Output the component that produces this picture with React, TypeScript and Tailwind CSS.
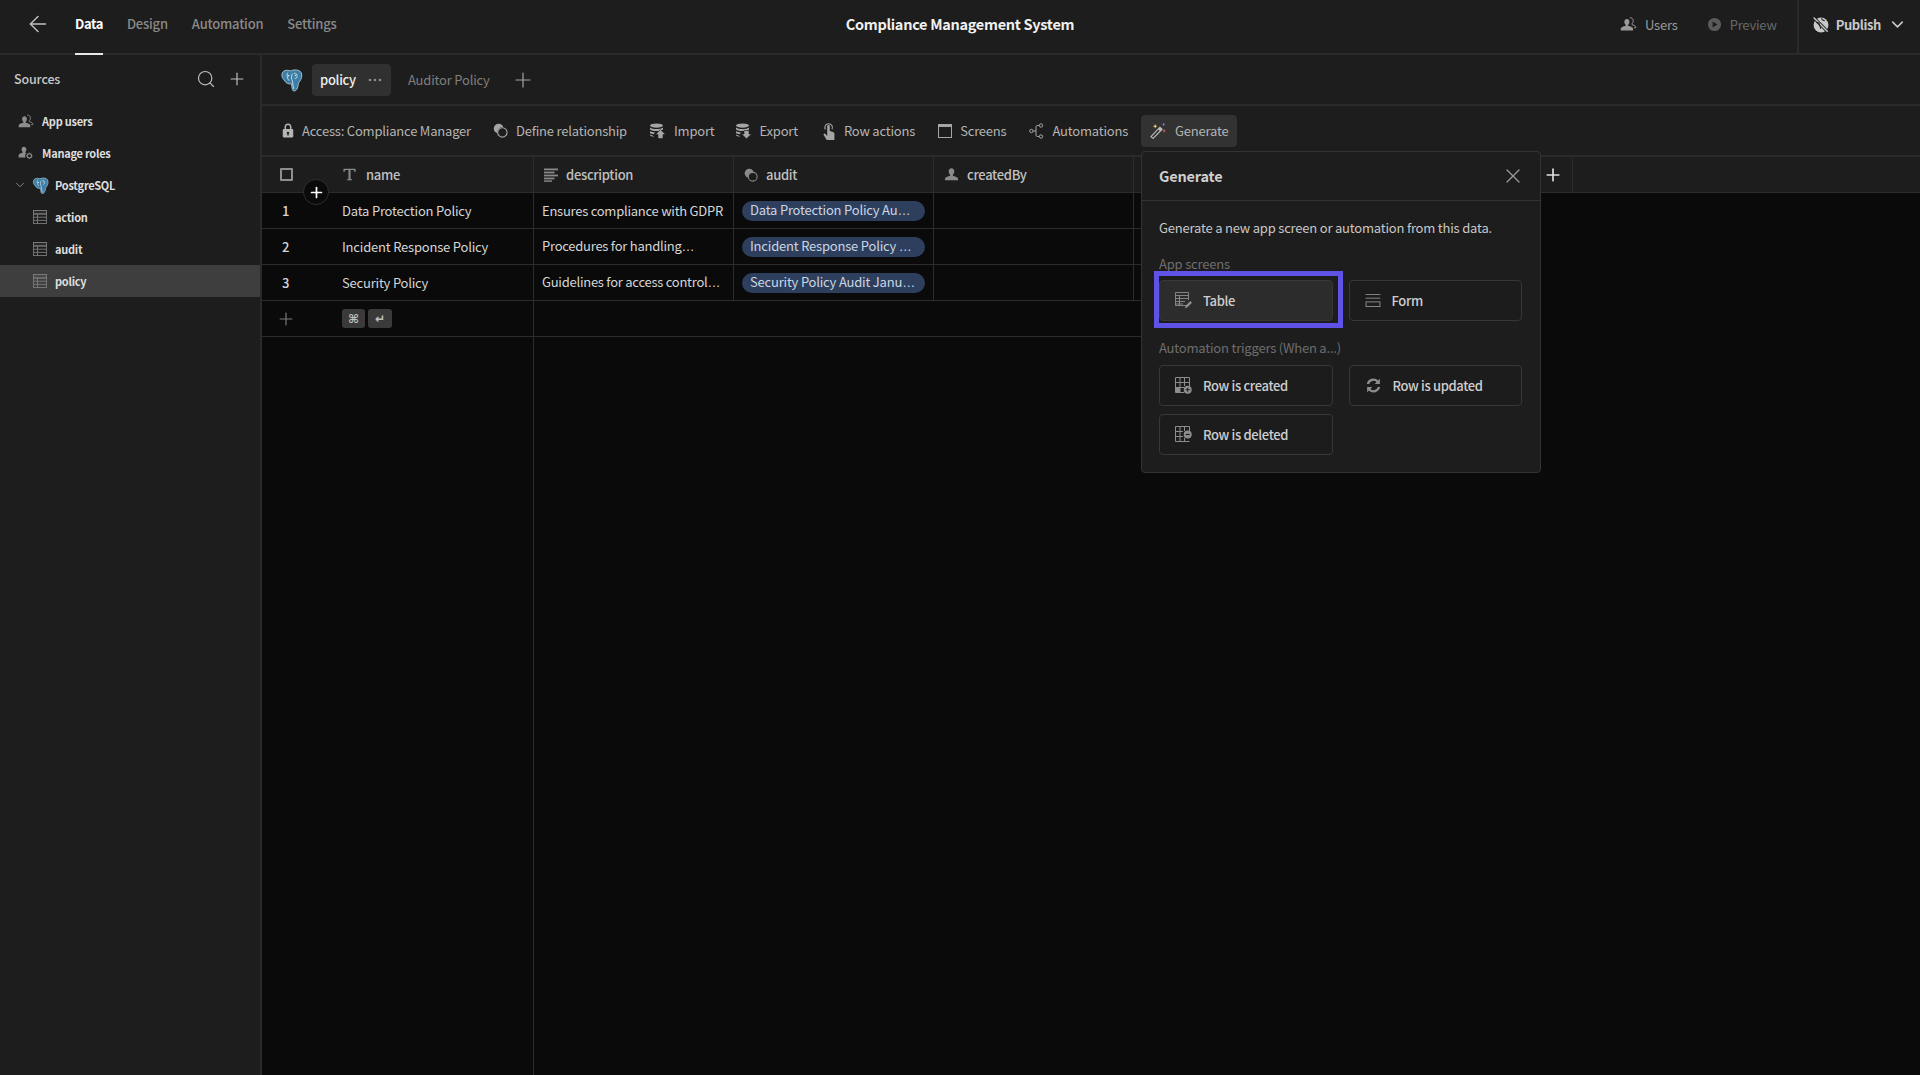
import React from "react";
import { ArrowLeft, Search, Plus, ChevronDown, X } from "lucide-react";

type P = { className?: string };

const Pg = ({ className }: P) => (
  <svg viewBox="0 0 24 24" className={className}>
    <path d="M2 6C2.500 2 7 1 11 2.500C14 1 20 .8 22 4C23.500 7 22.500 11 20.500 13.500C19.800 14.500 19.400 15 19 17C18.500 20 17.500 23.500 14.500 23.500C12.500 23.500 12.400 19 12 16C9 16.500 6.500 15.500 5 13C3 10.500 1.600 9 2 6Z" fill="#3d7ea6" stroke="#c4dbe8" strokeWidth="0.8" />
    <path d="M7.800 4.600C6.800 7.400 7.600 10.600 9.400 12.600M13.200 5.200C11.600 7 11.600 10.400 13 13.400C13.400 15.600 13.400 18.600 14.600 21.400M14.600 5C17 4.600 18 6.200 17.800 8.600C17.600 10.200 16 10.800 15.200 10" fill="none" stroke="#e8f1f6" strokeWidth="0.8" />
    <circle cx="9" cy="7.600" r="0.800" fill="#e8f1f6" />
    <circle cx="16" cy="7.200" r="0.700" fill="#e8f1f6" />
  </svg>
);

const Person = ({ className }: P) => (
  <svg viewBox="0 0 16 16" fill="currentColor" className={className}>
    <path d="M8 1.200c-1.900 0-3 1.500-3 3.400 0 1.500.7 2.900 1.500 3.600v1.100c-2 .5-4.300 1.400-5.100 2.300-.3.4-.4.9-.4 1.400v1h14v-1c0-.5-.1-1-.4-1.400-.8-.9-3.100-1.800-5.100-2.300V8.200c.8-.7 1.500-2.100 1.500-3.600 0-1.900-1.100-3.400-3-3.400z" />
  </svg>
);

const Group = ({ className }: P) => (
  <svg viewBox="0 0 18 16" fill="currentColor" className={className}>
    <path d="M7.500 2.600c-1.800 0-2.900 1.400-2.900 3.100 0 1.400.6 2.600 1.400 3.200v1c-1.800.5-4 1.200-4.800 2.100-.3.4-.4.8-.4 1.200V15h13v-1.800c0-.4-.1-.8-.4-1.200-.8-.9-3-1.600-4.800-2.100v-1c.8-.6 1.400-1.800 1.400-3.200 0-1.700-1.100-3.100-2.500-3.100z" />
    <path d="M10.400 1.500c1.900-.5 3.600 1 3.600 3 0 1.300-.5 2.400-1.200 3v1.200c1.400.4 2.800 1 3.600 1.800.3.4.4.8.4 1.100V12h-2" fill="none" stroke="currentColor" strokeWidth="1" />
  </svg>
);

const Roles = ({ className }: P) => (
  <svg viewBox="0 0 18 16" className={className}>
    <path fill="currentColor" d="M6.500 1C5 1 4 2.300 4 3.900c0 1.200.5 2.300 1.200 2.900v1C3.600 8.200 1.700 8.900 1 9.700c-.2.3-.3.7-.3 1.100V13h7.600a4.600 4.600 0 0 1 1-5l-1-.3v-.9C9 6.200 9.500 5.100 9.500 3.900 9.500 2.300 8 1 6.500 1z" />
    <circle cx="12.800" cy="11.200" r="2.400" fill="none" stroke="currentColor" strokeWidth="1.200" />
    <path d="M12.800 7.600v1.200M12.800 13.600v1.200M9.200 11.200h1.200M15.200 11.200h1.200M10.300 8.700l.8.8M14.500 12.900l.8.8M10.300 13.700l.8-.8M14.500 9.500l.8-.8" stroke="currentColor" strokeWidth="1.100" />
  </svg>
);

const TableIcon = ({ className }: P) => (
  <svg viewBox="0 0 14 14" fill="none" stroke="currentColor" strokeWidth="0.9" className={className}>
    <rect x="0.500" y="0.500" width="13" height="13" />
    <path d="M0.500 4h13M0.500 7.200h13M0.500 10.400h13M4.500 4v9.500" />
    <rect x="0.500" y="0.500" width="13" height="3.500" fill="currentColor" fillOpacity="0.150" />
  </svg>
);

const Lock = ({ className }: P) => (
  <svg viewBox="0 0 12 16" fill="currentColor" className={className}>
    <path fillRule="evenodd" d="M6 0.600C3.800 0.600 2.300 2.300 2.300 4.400V6.400H1.600C.9 6.400.4 6.900.4 7.600v6.600c0 .7.5 1.200 1.200 1.200h8.800c.7 0 1.200-.5 1.200-1.200V7.600c0-.7-.5-1.200-1.200-1.200H9.700V4.400C9.700 2.300 8.200.6 6 .6zM3.900 6.400V4.400C3.900 3.200 4.800 2.200 6 2.200s2.100 1 2.100 2.200v2H3.900zM6 9.200a1.400 1.400 0 0 1 .7 2.600v1.600H5.300v-1.600A1.400 1.400 0 0 1 6 9.200z" />
  </svg>
);

const Relation = ({ className }: P) => (
  <svg viewBox="0 0 16 16" className={className}>
    <circle cx="6" cy="6" r="5.200" fill="currentColor" />
    <circle cx="10" cy="10" r="5.400" fill="#1d1d1d" />
    <circle cx="10" cy="10" r="5" fill="none" stroke="currentColor" strokeWidth="1.200" />
  </svg>
);

const DbArrow = ({ className, down }: P & { down?: boolean }) => (
  <svg viewBox="0 0 17 16" fill="currentColor" className={className}>
    <ellipse cx="7.500" cy="2.600" rx="6.500" ry="2.100" />
    <path d="M1 4.400c1.400 1.200 3.800 1.600 6.500 1.600s5.100-.4 6.500-1.600V6.400c-1.400 1.100-3.800 1.500-6.500 1.500S2.400 7.500 1 6.400zM1 8c1.300 1 3 1.400 5.200 1.500L4.500 11.300c-1.500-.2-2.800-.6-3.500-1.200zM1 11.500c.6.5 1.500.8 2.600 1l1.700 1.300C3 13.600 1 13 1 12z" />
    {down ? <path d="M9 7.500h5v3.500h2.500L11.500 15.800 6.500 11H9z" stroke="#1d1d1d" strokeWidth="0.600" /> : <path d="M11.500 6.500L16.500 11.500H14v4H9v-4H6.500z" stroke="#1d1d1d" strokeWidth="0.600" />}
  </svg>
);

const Tap = ({ className }: P) => (
  <svg viewBox="0 0 14 18" fill="currentColor" className={className}>
    <path d="M5.200 7.500V4.200a1.300 1.300 0 0 1 2.600 0V9l3.200.9c.9.3 1.400 1 1.400 1.900V18H4.700L1.700 13c-.4-.7 0-1.500.8-1.500.4 0 .8.2 1 .5l1.700 2z" />
    <path d="M3.400 7.500a3.800 3.800 0 1 1 6.600-.2" fill="none" stroke="currentColor" strokeWidth="1.100" />
  </svg>
);

const Screens = ({ className }: P) => (
  <svg viewBox="0 0 14 14" className={className}>
    <rect x="0.500" y="0.500" width="13" height="13" fill="none" stroke="currentColor" strokeWidth="1" />
    <rect x="0.500" y="0.500" width="13" height="2.500" fill="currentColor" />
  </svg>
);

const Flow = ({ className }: P) => (
  <svg viewBox="0 0 15 16" fill="none" stroke="currentColor" strokeWidth="1" className={className}>
    <circle cx="2.400" cy="8" r="1.700" />
    <circle cx="12" cy="2.500" r="1.700" />
    <circle cx="12" cy="13.500" r="1.700" />
    <path d="M4.100 8H7M10.300 2.500H8.300C7.500 2.500 7 3 7 3.800v8.400c0 .8.5 1.300 1.300 1.300h2" />
  </svg>
);

const Wand = ({ className }: P) => (
  <svg viewBox="0 0 18 18" className={className}>
    <path d="M1 15.500L10.500 5.500 12.800 7.700 3.300 17.300z" fill="none" stroke="#bdbdbd" strokeWidth="1.200" />
    <path d="M8.500 7.600l2.300 2.200 2-2.100-2.300-2.200z" fill="#bdbdbd" />
    <path d="M5.500 2L6.200 3.800 8 4.500 6.200 5.200 5.500 7 4.800 5.200 3 4.500 4.800 3.800z" fill="#e8c46a" />
    <path d="M14.500 0.500L15 2 16.500 2.500 15 3 14.500 4.500 14 3 12.500 2.500 14 2z" fill="#7d8ff0" />
    <path d="M15 7.500L15.600 9 17 9.500 15.600 10 15 11.500 14.400 10 13 9.500 14.400 9z" fill="#e06262" />
  </svg>
);

const TypeT = ({ className }: P) => (
  <svg viewBox="0 0 14 14" fill="currentColor" className={className}>
    <path d="M0.500 0.800H13.500V4.400H12.400C12.200 2.900 11.800 2.200 10.500 2.200H8.100V11.800L9.800 12.300V13.300H4.200V12.300L5.900 11.800V2.200H3.500C2.200 2.200 1.800 2.900 1.600 4.400H.5z" />
  </svg>
);

const Lines = ({ className }: P) => (
  <svg viewBox="0 0 14 14" fill="currentColor" className={className}>
    <rect x="0" y="0.500" width="14" height="1.800" />
    <rect x="0" y="3.600" width="10.500" height="1.800" />
    <rect x="0" y="6.600" width="14" height="1.800" />
    <rect x="0" y="9.600" width="10.500" height="1.800" />
    <rect x="0" y="12.400" width="8" height="1.400" />
  </svg>
);

const TableEdit = ({ className }: P) => (
  <svg viewBox="0 0 17 17" fill="none" stroke="currentColor" strokeWidth="0.900" className={className}>
    <path d="M11 13.500H.5V.5H13.500V8" />
    <path d="M.5 3.500H13.500M.5 6.500H13.500M.5 9.500H10M.5 12H8M4.500 3.500V13.500" />
    <path d="M9.800 16.500l1-3 4.500-4.500 1.700 1.700-4.500 4.500z" fill="currentColor" stroke="none" />
  </svg>
);

const FormIcon = ({ className }: P) => (
  <svg viewBox="0 0 16 14" fill="none" stroke="currentColor" strokeWidth="1" className={className}>
    <path d="M0 .5H16M0 4.500H16" />
    <rect x="0.500" y="8.500" width="15" height="5" />
  </svg>
);

const RowAdd = ({ className }: P) => (
  <svg viewBox="0 0 17 17" className={className}>
    <path d="M.5.5H14.500V9M.5.5V15.500H9M.5 5.500H14.500M5 .5V15.500M9.500 .5V9M.5 10.500H9" fill="none" stroke="currentColor" strokeWidth="1" />
    <rect x="0.500" y="10.500" width="4.500" height="5" fill="currentColor" />
    <circle cx="12.700" cy="12.700" r="4" fill="currentColor" />
    <path d="M12.700 10.700v4M10.700 12.700h4" stroke="#1d1d1d" strokeWidth="1" />
  </svg>
);

const RowDel = ({ className }: P) => (
  <svg viewBox="0 0 17 17" className={className}>
    <path d="M.5.500H14.500V5M.5.500V15.500H14.500M.5 5.500H8M.5 10.500H8M5 .5V15.500M9.500 .5V5M9.500 12V15.500" fill="none" stroke="currentColor" strokeWidth="1" />
    <circle cx="12.700" cy="8.500" r="4" fill="currentColor" />
    <path d="M10.700 8.500h4" stroke="#1d1d1d" strokeWidth="1.200" />
  </svg>
);

const Refresh = ({ className }: P) => (
  <svg viewBox="0 0 16 16" fill="currentColor" className={className}>
    <path d="M14 1.500v5H9.200l1.700-1.700A4.300 4.300 0 0 0 3.900 6.500H1.700A6.400 6.400 0 0 1 12.400 3.200z" />
    <path d="M2 14.500v-5h4.800L5.100 11.200A4.300 4.300 0 0 0 12.100 9.500h2.200A6.400 6.400 0 0 1 3.600 12.800z" />
  </svg>
);

const Play = ({ className }: P) => (
  <svg viewBox="0 0 16 16" className={className}>
    <path fillRule="evenodd" fill="currentColor" d="M8 1a7 7 0 1 0 0 14A7 7 0 0 0 8 1zM6 4.800v6.400L11.200 8z" />
  </svg>
);

const Globe = ({ className }: P) => (
  <svg viewBox="0 0 16 16" className={className}>
    <circle cx="8.500" cy="8.500" r="7" fill="currentColor" />
    <path d="M1 1L15 15" stroke="#1d1d1d" strokeWidth="3" />
    <path d="M1.500 1.500L14.800 14.800" stroke="currentColor" strokeWidth="1.300" />
    <path d="M4 6c2 0 3 1 3 2.500s1.500 1.500 1 3.500M9 2c0 2 2 2 3 2.500" stroke="#1d1d1d" strokeWidth="1" fill="none" />
  </svg>
);

const Ell = () => <span className="font-['Liberation_Sans',sans-serif]">…</span>;

const Tab = ({ label, active }: { label: string; active?: boolean }) => (
  <div className={`relative flex h-full items-center text-[13px] ${active ? "font-semibold tracking-[-0.4px] text-white" : "font-medium tracking-[-0.2px] text-[#8a8a8a]"}`}>
    {label}
    {active && <div className="absolute -bottom-[7px] left-0 right-0 h-[2px] bg-[#e8e8e8]" />}
  </div>
);

const SideItem = ({ icon, label, indent, selected, chevron }: { icon: React.ReactNode; label: string; indent: "top" | "src" | "tbl"; selected?: boolean; chevron?: boolean }) => (
  <div className={`flex h-8 items-center text-[11px] font-semibold leading-none tracking-[-0.25px] text-[#dedede] ${selected ? "bg-[#3e3e3e]" : ""} ${indent === "top" ? "pl-[18px]" : indent === "tbl" ? "pl-[33px]" : "pl-[13px]"}`}>
    {chevron && <ChevronDown className="mr-[5px] size-[14px] text-[#8a8a8a]" strokeWidth={1.6} />}
    {icon}
    <span className={indent === "top" ? "ml-[8px]" : indent === "tbl" ? "ml-[8px]" : "ml-[6px]"}>{label}</span>
  </div>
);

const ToolBtn = ({ icon, label, active, className }: { icon: React.ReactNode; label: string; active?: boolean; className?: string }) => (
  <div className={`flex h-8 items-center gap-2 rounded-[4px] px-2 text-[13px] leading-none tracking-[-0.2px] text-[#b4b4b4] ${active ? "bg-[#323232]" : ""} ${className ?? ""}`}>
    {icon}
    <span>{label}</span>
  </div>
);

const HeadCell = ({ icon, label, width }: { icon: React.ReactNode; label: string; width: string }) => (
  <div className={`flex h-full shrink-0 items-center gap-[8px] border-r border-[#2c2c2c] pl-[10px] text-[13px] font-medium tracking-[-0.3px] text-[#c0c0c0] ${width}`}>
    {icon}
    <span>{label}</span>
  </div>
);

const rows: [string, string, string, React.ReactNode][] = [
  ["1", "Data Protection Policy", "Ensures compliance with GDPR", <>Data Protection Policy Au<Ell /></>],
  ["2", "Incident Response Policy", "Procedures for handling", <>Incident Response Policy <Ell /></>],
  ["3", "Security Policy", "Guidelines for access control", <>Security Policy Audit Janu<Ell /></>],
];

const GenBtn = ({ icon, label, selected }: { icon: React.ReactNode; label: string; selected?: boolean }) => (
  <div className={`relative flex h-[41px] items-center gap-[11px] rounded-[4px] border border-[#373737] pl-[15px] text-[13px] font-medium leading-none tracking-[-0.35px] text-[#cecece] ${selected ? "bg-[#2c2c2c]" : "bg-[#1c1c1c]"}`}>
    {icon}
    <span className="pb-[1px]">{label}</span>
    {selected && <div className="absolute -bottom-[8px] -left-[6px] -right-[11px] -top-[10px] border-[5px] border-[#5f52e6]" />}
  </div>
);

export default function App() {
  return (
    <div className="flex h-screen w-screen flex-col overflow-hidden bg-[#1d1d1d] font-['Noto_Sans_CJK_SC','Source_Sans_Pro',sans-serif]">
      {/* top bar */}
      <header className="relative flex h-[55px] shrink-0 items-center border-b-2 border-[#2a2a2a] pb-[5px]">
        <ArrowLeft className="ml-[25px] size-[26px] text-[#c0c0c0]" strokeWidth={1.3} />
        <nav className="ml-[24px] flex h-full gap-[24px]">
          <Tab label="Data" active />
          <Tab label="Design" />
          <Tab label="Automation" />
          <Tab label="Settings" />
        </nav>
        <div className="pointer-events-none absolute bottom-[5px] left-0 right-0 top-0 flex items-center justify-center">
          <span className="text-[14.5px] font-semibold leading-none tracking-[-0.3px] text-[#f0f0f0]">Compliance Management System</span>
        </div>
        <div className="ml-auto flex items-center self-stretch">
          <div className="flex items-center gap-2 text-[13px] leading-none tracking-[-0.2px] text-[#9a9a9a]">
            <Group className="h-4 w-[17px]" />
            <span>Users</span>
          </div>
          <div className="ml-[29px] flex items-center gap-2 text-[13px] leading-none tracking-[-0.2px] text-[#686868]">
            <Play className="size-[15px] text-[#5a5a5a]" />
            <span>Preview</span>
          </div>
          <div className="-mb-[5px] ml-[20px] flex items-center self-stretch border-l-2 border-[#2a2a2a] pb-[5px] pl-[13px] pr-[13px] text-[13px] font-semibold leading-none tracking-[-0.4px] text-[#c8c8c8]">
            <Globe className="mr-[7px] size-[17px]" />
            <span>Publish</span>
            <ChevronDown className="ml-[7px] size-[19px]" strokeWidth={2} />
          </div>
        </div>
      </header>

      <div className="flex min-h-0 flex-1">
        {/* sidebar */}
        <aside className="flex w-[262px] shrink-0 flex-col border-r-2 border-[#2a2a2a]">
          <div className="flex h-[48px] items-center pl-[14px] pr-[13px] text-[12.5px] font-medium leading-none tracking-[-0.15px] text-[#c8c8c8]">
            <span>Sources</span>
            <Search className="ml-auto size-[20px] text-[#c0c0c0]" strokeWidth={1.4} />
            <Plus className="ml-[11px] size-[20px] text-[#c0c0c0]" strokeWidth={1.4} />
          </div>
          <div className="pt-[2px]">
            <SideItem indent="top" label="App users" icon={<Group className="h-4 w-4 text-[#8d8d8d]" />} />
            <SideItem indent="top" label="Manage roles" icon={<Roles className="h-4 w-4 text-[#8d8d8d]" />} />
            <SideItem indent="src" chevron label="PostgreSQL" icon={<Pg className="size-[17px]" />} />
            <SideItem indent="tbl" label="action" icon={<TableIcon className="size-[14px] text-[#7a7a7a]" />} />
            <SideItem indent="tbl" label="audit" icon={<TableIcon className="size-[14px] text-[#7a7a7a]" />} />
            <SideItem indent="tbl" selected label="policy" icon={<TableIcon className="size-[14px] text-[#7a7a7a]" />} />
          </div>
        </aside>

        {/* main */}
        <main className="relative flex min-w-0 flex-1 flex-col">
          <div className="flex h-[51px] shrink-0 items-center border-b-2 border-[#2a2a2a] pl-[18px]">
            <Pg className="h-[24px] w-[23px]" />
            <div className="ml-[9px] flex h-8 w-[79px] items-center rounded-[4px] bg-[#303030] pl-2 text-[13px] font-medium leading-none tracking-[-0.3px] text-[#eeeeee]">
              policy
              <svg viewBox="0 0 14 4" className="ml-[12px] h-[4px] w-[14px] text-[#8f8f8f]" fill="currentColor">
                <circle cx="2" cy="2" r="1.300" />
                <circle cx="7" cy="2" r="1.300" />
                <circle cx="12" cy="2" r="1.300" />
              </svg>
            </div>
            <span className="ml-[17px] text-[13px] leading-none tracking-[-0.2px] text-[#7f7f7f]">Auditor Policy</span>
            <Plus className="ml-[21px] size-6 text-[#a4a4a4]" strokeWidth={1.2} />
          </div>

          <div className="flex h-[51px] shrink-0 items-center gap-[6px] border-b-2 border-[#2a2a2a] pl-[12px]">
            <ToolBtn icon={<Lock className="h-[15px] w-[12px] text-[#b5b5b5]" />} label="Access: Compliance Manager" />
            <ToolBtn icon={<Relation className="size-[15px] text-[#a5a5a5]" />} label="Define relationship" />
            <ToolBtn icon={<DbArrow className="h-4 w-[17px] text-[#a5a5a5]" />} label="Import" />
            <ToolBtn className="-ml-[2px]" icon={<DbArrow down className="h-4 w-[17px] text-[#a5a5a5]" />} label="Export" />
            <ToolBtn className="ml-[2px]" icon={<Tap className="h-[18px] w-[14px] text-[#a5a5a5]" />} label="Row actions" />
            <ToolBtn className="ml-[1px]" icon={<Screens className="size-[14px] text-[#a5a5a5]" />} label="Screens" />
            <ToolBtn className="ml-[1px]" icon={<Flow className="h-4 w-[15px] text-[#a5a5a5]" />} label="Automations" />
            <ToolBtn active className="-ml-[1px] pl-[9px]" icon={<Wand className="size-[17px]" />} label="Generate" />
          </div>

          {/* grid */}
          <div className="flex min-h-0 flex-1 bg-[#0a0a0a]">
            <div className="flex w-[272px] shrink-0 flex-col border-r border-[#2c2c2c]">
              <div className="flex h-[36px] shrink-0 items-center border-b border-[#2c2c2c] bg-[#1d1d1d]">
                <div className="ml-[18px] size-[13px] rounded-[1px] border-2 border-[#8e8e8e]" />
                <TypeT className="ml-[50px] size-[13px] text-[#8a8a8a]" />
                <span className="ml-[10px] text-[13px] font-medium tracking-[-0.3px] text-[#c0c0c0]">name</span>
              </div>
              {rows.map((r) => (
                <div key={r[0]} className="flex h-[36px] shrink-0 items-center border-b border-[#2c2c2c] text-[13px] leading-none tracking-[-0.2px] text-[#d6d6d6]">
                  <span className="w-[80px] pb-[1px] pl-[20px] font-medium">{r[0]}</span>
                  <span>{r[1]}</span>
                </div>
              ))}
              <div className="flex h-[36px] shrink-0 items-center border-b border-[#2c2c2c]">
                <Plus className="ml-[14px] size-[20px] text-[#7a7a7a]" strokeWidth={1.4} />
                <div className="ml-[46px] flex gap-[3px]">
                  <kbd className="flex h-[19px] w-[23px] items-center justify-center rounded-[3px] bg-[#3a3a3a] font-['DejaVu_Sans',sans-serif] text-[12px] font-bold text-[#c0c0c0]">⌘</kbd>
                  <kbd className="flex h-[19px] w-[24px] items-center justify-center rounded-[3px] bg-[#3a3a3a] font-['DejaVu_Sans',sans-serif] text-[12px] font-bold text-[#c0c0c0]">↵</kbd>
                </div>
              </div>
            </div>

            <div className="flex min-w-0 flex-1 flex-col">
              <div className="flex h-[36px] shrink-0 items-center border-b border-[#2c2c2c] bg-[#1d1d1d]">
                <HeadCell width="w-[200px]" label="description" icon={<Lines className="size-[14px] text-[#8a8a8a]" />} />
                <HeadCell width="w-[200px]" label="audit" icon={<Relation className="size-[14px] text-[#8a8a8a]" />} />
                <HeadCell width="w-[200px]" label="createdBy" icon={<Person className="size-[15px] text-[#8a8a8a]" />} />
                <HeadCell width="w-[439px]" label="" icon={null} />
              </div>
              {rows.map((r) => (
                <div key={r[0]} className="flex h-[36px] w-[1000px] shrink-0 items-center border-b border-[#2c2c2c] text-[13px] tracking-[-0.2px] text-[#d6d6d6]">
                  <div className="flex h-full w-[200px] shrink-0 items-center border-r border-[#2c2c2c] pl-[8px]">
                    <span className="whitespace-nowrap leading-[20px] tracking-[-0.25px]">
                      {r[2]}
                      {r[0] !== "1" && <Ell />}
                    </span>
                  </div>
                  <div className="flex h-full w-[200px] shrink-0 items-center border-r border-[#2c2c2c] pl-[8px]">
                    <div className="flex h-5 w-[183px] items-center rounded-[10px] bg-[#2d3f5c] px-2 text-[#cbd5e4]">
                      <span className="whitespace-nowrap leading-[20px]">{r[3]}</span>
                    </div>
                  </div>
                  <div className="h-full w-[200px] shrink-0 border-r border-[#2c2c2c]" />
                </div>
              ))}
              <div className="h-[36px] w-[1000px] shrink-0 border-b border-[#2c2c2c]" />
            </div>
          </div>

          {/* header add-column */}
          <Plus className="absolute left-[1281px] top-[110px] size-[20px] text-[#e0e0e0]" strokeWidth={2} />

          {/* hover add button */}
          <div className="absolute left-[41px] top-[124px] flex size-[26px] items-center justify-center rounded-full border border-[#2e2e2e] bg-[#0a0a0a]">
            <Plus className="size-[17px] text-white" strokeWidth={2.4} />
          </div>

          {/* generate popover */}
          <div className="absolute left-[879px] top-[96px] flex w-[400px] flex-col rounded-[4px] border border-[#333333] bg-[#1d1d1d]">
            <div className="flex h-[49px] shrink-0 items-center justify-between border-b border-[#333333] pl-[17px] pr-[15px]">
              <span className="text-[14.5px] font-semibold leading-none tracking-[-0.2px] text-[#cfcfcf]">Generate</span>
              <X className="size-6 text-[#9a9a9a]" strokeWidth={1.2} />
            </div>
            <div className="flex flex-col pb-[17px] pl-[17px] pr-[18px]">
              <p className="mt-[17px] whitespace-nowrap text-[13px] leading-[20px] tracking-[-0.2px] text-[#c8c8c8]">Generate a new app screen or automation from this data.</p>
              <p className="mt-[16px] text-[13px] leading-[20px] tracking-[-0.2px] text-[#6e6e6e]">App screens</p>
              <div className="mt-[6px] grid grid-cols-2 gap-x-4">
                <GenBtn selected label="Table" icon={<TableEdit className="size-[17px] text-[#8d8d8d]" />} />
                <GenBtn label="Form" icon={<FormIcon className="h-[13px] w-4 text-[#8d8d8d]" />} />
              </div>
              <p className="mt-[17px] text-[13px] leading-[20px] tracking-[-0.2px] text-[#6e6e6e]">Automation triggers (When a...)</p>
              <div className="mt-[7px] grid grid-cols-2 gap-x-4 gap-y-2">
                <GenBtn label="Row is created" icon={<RowAdd className="size-[17px] text-[#8d8d8d]" />} />
                <GenBtn label="Row is updated" icon={<Refresh className="size-[17px] text-[#8d8d8d]" />} />
                <GenBtn label="Row is deleted" icon={<RowDel className="size-[17px] text-[#8d8d8d]" />} />
              </div>
            </div>
          </div>
        </main>
      </div>
    </div>
  );
}
